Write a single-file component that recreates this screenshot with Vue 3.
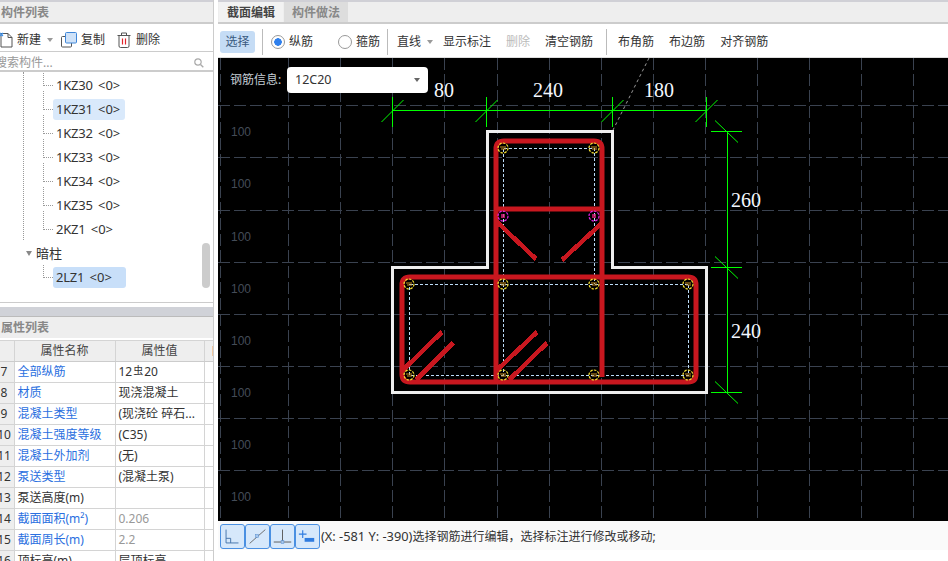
<script setup>
const treeRows = [
  { name: '1KZ30', kind: 'leaf' },
  { name: '1KZ31', kind: 'leaf', sel: 'light' },
  { name: '1KZ32', kind: 'leaf' },
  { name: '1KZ33', kind: 'leaf' },
  { name: '1KZ34', kind: 'leaf' },
  { name: '1KZ35', kind: 'leaf' },
  { name: '2KZ1', kind: 'leaf' },
  { name: '暗柱', kind: 'group' },
  { name: '2LZ1', kind: 'last', sel: 'strong' },
]
const props = [
  { n: 7, name: '全部纵筋', link: true, val: 'rebar' },
  { n: 8, name: '材质', link: true, val: '现浇混凝土' },
  { n: 9, name: '混凝土类型', link: true, val: '(现浇砼 碎石...' },
  { n: 10, name: '混凝土强度等级', link: true, val: '(C35)' },
  { n: 11, name: '混凝土外加剂', link: true, val: '(无)' },
  { n: 12, name: '泵送类型', link: true, val: '(混凝土泵)' },
  { n: 13, name: '泵送高度(m)', val: '' },
  { n: 14, name: '截面面积(m²)', link: true, val: '0.206', muted: true },
  { n: 15, name: '截面周长(m)', link: true, val: '2.2', muted: true },
  { n: 16, name: '顶标高(m)', val: '层顶标高' },
]
const gridX = [288.5, 340.5, 392.5, 444.5, 497.5, 549.5, 601.5, 653.5, 705.5, 757.5, 809.5, 861.5, 913.5]
const gridY = [105.5, 157.5, 210.5, 262.5, 314.5, 366.5, 418.5, 470.5]
const labels = [136, 188, 241, 293, 345, 397, 449, 501]
const yellowBars = [
  [503, 148], [594, 148], [409, 284], [503, 284], [594, 284], [688, 284],
  [409, 375], [503, 375], [594, 375], [688, 375],
]
const pinkBars = [[503, 216], [594, 216]]
const hTicks = [392.5, 486.5, 612.5, 706.5]
const vTicks = [131.5, 267.5, 392.5]
const diagonals = [
  [497, 222, 536, 259], [602, 223, 562, 260],
  [403, 370, 442, 332], [416, 380, 453, 343],
  [497, 370, 537, 332], [509, 380, 547, 343],
]
const dims = [
  { t: '80', x: 434, y: 97 }, { t: '240', x: 533, y: 97 }, { t: '180', x: 644, y: 97 },
  { t: '260', x: 731, y: 207 }, { t: '240', x: 731, y: 338 },
]
</script>

<template>
  <div class="app">
    <aside class="side">
      <div class="panel-head first"><span class="head-title">构件列表</span></div>
      <div class="tools">
        <span class="tool tool-new">
          <svg width="13" height="16" viewBox="0 0 13 16"><path d="M1 1.5H8L12 5.5V15H1Z" fill="#fff" stroke="#555" /><path d="M8 1.5V5.5H12" fill="none" stroke="#555" /><path d="M0 1L3 4M3 1L0 4" stroke="#3b8ee8" stroke-width="1.2" /></svg>
          新建<i class="caret"></i>
        </span>
        <span class="tool tool-copy">
          <svg width="16" height="16" viewBox="0 0 16 16"><rect x="0.5" y="4.5" width="10" height="10.5" rx="1" fill="#fff" stroke="#555" /><rect x="4.5" y="0.5" width="11" height="10.5" rx="1" fill="#cfe2f8" stroke="#3f86d8" /></svg>
          复制
        </span>
        <span class="tool tool-del">
          <svg width="14" height="16" viewBox="0 0 14 16"><path d="M0.5 3.5H13.5M4.5 3V1H9.5V3M2 3.5V14A1.5 1.5 0 0 0 3.5 15.5H10.5A1.5 1.5 0 0 0 12 14V3.5" fill="none" stroke="#555" /><path d="M5.5 6.5V12.5M8.5 6.5V12.5" stroke="#e2252b" stroke-width="1.2" /></svg>
          删除
        </span>
      </div>
      <div class="search">
        <span class="search-text">搜索构件...</span>
        <svg class="search-icon" width="10" height="10" viewBox="0 0 10 10"><circle cx="4" cy="4" r="3.2" fill="none" stroke="#aaa" stroke-width="1.2" /><path d="M6.5 6.5L9.3 9.3" stroke="#aaa" stroke-width="1.4" /></svg>
      </div>
      <div class="tree">
        <div
          v-for="row in treeRows"
          :key="row.name"
          class="tree-row"
          :class="'tree-' + row.kind"
        >
          <template v-if="row.kind === 'group'">
            <i class="tree-caret"></i><span>{{ row.name }}</span>
          </template>
          <span v-else class="tree-item" :class="row.sel">{{ row.name }} <span class="count">&lt;0&gt;</span></span>
        </div>
        <div class="thumb"></div>
      </div>
      <div class="splitter"></div>
      <div class="panel-head second"><span class="head-title">属性列表</span></div>
      <table class="props">
        <colgroup><col class="c-idx" /><col class="c-name" /><col class="c-val" /><col class="c-end" /></colgroup>
        <thead>
          <tr><th></th><th>属性名称</th><th>属性值</th><th><i class="end-mark"></i></th></tr>
        </thead>
        <tbody>
          <tr v-for="p in props" :key="p.n">
            <td class="idx"><div class="idx-num">{{ p.n }}</div></td>
            <td :class="{ link: p.link }">{{ p.name }}</td>
            <td :class="{ muted: p.muted }">
              <template v-if="p.val === 'rebar'">12<span class="rebar">虫</span>20</template>
              <template v-else>{{ p.val }}</template>
            </td>
            <td></td>
          </tr>
        </tbody>
      </table>
    </aside>

    <main class="main">
      <div class="tabs">
        <span class="tab active">截面编辑</span>
        <span class="tab">构件做法</span>
      </div>
      <div class="toolbar">
        <span class="btn-select">选择</span>
        <i class="sep sep-a"></i>
        <span class="radio radio-a"><i class="dot on"></i>纵筋</span>
        <span class="radio radio-b"><i class="dot"></i>箍筋</span>
        <i class="sep sep-b"></i>
        <span class="item item-line">直线<i class="caret"></i></span>
        <span class="item item-show">显示标注</span>
        <span class="item item-del">删除</span>
        <span class="item item-clear">清空钢筋</span>
        <i class="sep sep-c"></i>
        <span class="item item-corner">布角筋</span>
        <span class="item item-edge">布边筋</span>
        <span class="item item-align">对齐钢筋</span>
      </div>
      <div class="canvas">
        <svg class="drawing" width="730" height="463" viewBox="218 58 730 463">
          <g class="grid">
            <line x1="220.5" y1="58" x2="220.5" y2="521" />
            <line v-for="x in gridX" :key="x" :x1="x" y1="58" :x2="x" y2="521" />
            <line v-for="y in gridY" :key="y" x1="218" :y1="y" x2="948" :y2="y" />
          </g>
          <text v-for="y in labels" :key="y" class="grid-label" x="231" :y="y">100</text>
          <line class="leader" x1="649" y1="58" x2="613" y2="130" />
          <path class="outline" d="M487 131.5H612.5V267.5H706V392.5H392.5V267.5H487Z" />
          <path class="stirrup-thin" d="M503.5 148.5H594.5V284M503.5 148.5V375.5M409.5 284H688.5V375.5H409.5Z" />
          <g class="rebars">
            <path d="M410 277H688Q696 277 696 285V374Q696 382 688 382H410Q402 382 402 374V285Q402 277 410 277Z" />
            <path d="M496 382V149Q496 141 504 141H594Q602 141 602 149V377" />
            <path d="M496 209H602" />
            <line v-for="(d, i) in diagonals" :key="i" class="diag" :x1="d[0]" :y1="d[1]" :x2="d[2]" :y2="d[3]" />
          </g>
          <g v-for="(b, i) in yellowBars" :key="'y' + i">
            <circle class="bar bar-y" :cx="b[0]" :cy="b[1]" r="5" />
            <path class="bar-core" :d="`M${b[0] - 3} ${b[1] - 1}h6M${b[0] - 2} ${b[1] + 1}h5`" />
          </g>
          <g v-for="(b, i) in pinkBars" :key="'p' + i">
            <circle class="bar bar-p" :cx="b[0]" :cy="b[1]" r="5" />
            <path class="bar-core-p" :d="`M${b[0] - 2} ${b[1] - 1}h4M${b[0] - 2} ${b[1] + 1}h4`" />
          </g>
          <g class="dim">
            <line x1="392" y1="110.5" x2="707" y2="110.5" />
            <g v-for="x in hTicks" :key="x">
              <line :x1="x" y1="97" :x2="x" y2="127" />
              <line :x1="x - 11" y1="122" :x2="x + 11" y2="100" />
            </g>
            <line x1="727.5" y1="131" x2="727.5" y2="392" />
            <g v-for="y in vTicks" :key="y">
              <line x1="711" :y1="y" x2="742" :y2="y" />
              <line x1="715" :y1="y - 11" x2="738" :y2="y + 11" />
            </g>
          </g>
          <text v-for="d in dims" :key="d.t + d.x" class="dim-text" :x="d.x" :y="d.y">{{ d.t }}</text>
        </svg>
        <div class="rebar-info">
          <span class="info-label">钢筋信息:</span>
          <span class="info-select">12C20<i class="caret dark"></i></span>
        </div>
      </div>
      <div class="status">
        <span class="mode">
          <svg width="25" height="25" viewBox="0 0 25 25"><path d="M5.5 5V19.5H19M5.5 14.5H10.5V19.5" fill="none" stroke="#3f6fa8" /></svg>
        </span>
        <span class="mode">
          <svg width="25" height="25" viewBox="0 0 25 25"><path d="M4 20L21 5" stroke="#666" /><rect x="10.5" y="10.5" width="3" height="3" fill="#a8c8ee" stroke="#5a90d0" stroke-width="0.6" /></svg>
        </span>
        <span class="mode">
          <svg width="25" height="25" viewBox="0 0 25 25"><path d="M12.5 5V18M3 18.5H22" stroke="#555" fill="none" /><rect x="11" y="17" width="3" height="3" fill="#a8c8ee" stroke="#5a90d0" stroke-width="0.6" /></svg>
        </span>
        <span class="mode">
          <svg width="24" height="25" viewBox="0 0 24 25"><path d="M7 6V14M3 10H11" stroke="#2f7ce0" stroke-width="1.2" fill="none" /><rect x="9" y="14" width="10" height="4" fill="#2f7ce0" /></svg>
        </span>
        <span class="status-text"><span class="coords">(X: -581 Y: -390)</span>选择钢筋进行编辑，选择标注进行修改或移动;</span>
      </div>
    </main>
  </div>
</template>

<style>
html, body { margin: 0; background: #fff; overflow: hidden; }
</style>

<style scoped>
.app {
  display: flex;
  width: 948px;
  height: 561px;
  overflow: hidden;
  background: #fff;
  font: 12px/1 "Noto Sans", "Noto Sans CJK SC", sans-serif;
  color: #333;
}
.side {
  flex: 0 0 214px;
  display: flex;
  flex-direction: column;
  height: 561px;
  overflow: hidden;
  box-sizing: border-box;
  border-right: 1px solid #ccc;
}
.panel-head {
  flex: none;
  height: 22px;
  box-sizing: border-box;
  border-top: 2px solid #d0d0d6;
  background: #eee;
  display: flex;
  align-items: center;
  padding-left: 1px;
}
.panel-head.first { padding-top: 2px; }
.panel-head.second { border-top: 0; height: 21px; }
.head-title { font-weight: 700; color: #888; }
.tools {
  flex: none;
  height: 30px;
  box-sizing: border-box;
  padding-top: 4px;
  border-top: 2px solid #ccc;
  border-bottom: 1px solid #ccc;
  display: flex;
  align-items: center;
}
.tool { display: flex; align-items: center; gap: 4px; }
.tool-new { width: 61px; }
.tool-copy { width: 56px; }
.tool-del { gap: 5px; }
.caret {
  width: 0; height: 0;
  margin-left: 6px;
  border: 3px solid transparent;
  border-top: 4px solid #999;
  border-bottom: 0;
}
.tool-new .caret { margin-left: 2px; }
.search {
  flex: none;
  height: 20px;
  box-sizing: border-box;
  padding: 3px 9px 0 0;
  border-bottom: 2px solid #ccc;
  display: flex;
  align-items: center;
  justify-content: space-between;
}
.search-text { margin-left: -5px; color: #999; }
.tree {
  position: relative;
  flex: none;
  height: 231px;
  box-sizing: border-box;
  padding-top: 1px;
  border-bottom: 1px solid #ccc;
  overflow: hidden;
}
.tree::before {
  content: "";
  position: absolute;
  left: 23px; top: 0;
  height: 168px;
  border-left: 1px dotted #999;
}
.tree-row {
  position: relative;
  height: 24px;
  display: flex;
  align-items: center;
  padding-left: 53px;
  font-size: 13px;
}
.tree-leaf::before, .tree-last::before {
  content: "";
  position: absolute;
  left: 43px; top: -6px;
  height: 18px;
  width: 9px;
  border-left: 1px dotted #999;
  border-bottom: 1px dotted #999;
}
.tree-leaf:nth-child(1)::before { top: -14px; height: 26px; }
.tree-last::before { top: 0; height: 12px; }
.tree-group { padding-left: 26px; }
.tree-caret {
  width: 0; height: 0;
  margin-right: 4px;
  border: 3px solid transparent;
  border-top: 5px solid #888;
  border-bottom: 0;
}
.tree-item {
  height: 21px;
  line-height: 21px;
  padding: 0 5px 0 3px;
  border-radius: 3px;
  letter-spacing: -0.2px;
}
.count { margin-left: 2px; letter-spacing: 0; }
.tree-item.light { background: #d9e9fb; }
.tree-item.strong { background: #c8dff9; padding-right: 14px; }
.thumb {
  position: absolute;
  left: 202px; top: 171px;
  width: 8px; height: 45px;
  border-radius: 4px;
  background: #ccc;
}
.splitter {
  flex: none;
  height: 9px;
  margin-top: 4px;
  background: #d0d2d8;
  border-bottom: 1px solid #bbb;
}
.props {
  flex: none;
  table-layout: fixed;
  border-collapse: collapse;
  width: 213px;
  margin-top: 2px;
  border-top: 1px solid #ccc;
}
.c-idx { width: 14px; }
.c-name { width: 101px; }
.c-val { width: 89px; }
.c-end { width: 9px; }
.props th, .props td {
  height: 20px;
  padding: 0 0 0 3px;
  border: 1px solid #d4d4d4;
  border-left: 0;
  white-space: nowrap;
  overflow: hidden;
  box-sizing: content-box;
}
.props th {
  background: #eee;
  font-weight: 400;
  text-align: center;
  padding: 0;
  color: #444;
  border-bottom-color: #ccc;
}
.props td:last-child, .props th:last-child { border-right: 0; }
.props td.idx {
  background: #eee;
  padding: 0;
  overflow: visible;
}
.idx-num { width: 8px; display: flex; justify-content: center; }
.link { color: #2a6fe0; }
.muted { color: #999; }
.rebar { font-size: 10px; position: relative; top: -2px; margin: 0 1px; }
.end-mark {
  display: block;
  width: 1px; height: 10px;
  margin-left: 7px;
  background: #f0c8a0;
}
.main {
  flex: 1;
  margin-left: 4px;
  min-width: 0;
  display: flex;
  flex-direction: column;
  height: 561px;
}
.tabs {
  flex: none;
  height: 22px;
  box-sizing: border-box;
  border-top: 2px solid #d0d0d6;
  background: #eee;
  display: flex;
  gap: 1px;
  padding-left: 1px;
}
.tab {
  width: 64px;
  box-sizing: border-box;
  padding-top: 1px;
  display: flex;
  align-items: center;
  justify-content: center;
  font-weight: 700;
  color: #888;
  background: #ddd;
}
.tab.active { background: #f2f2f2; color: #444; }
.toolbar {
  flex: none;
  height: 36px;
  box-sizing: border-box;
  padding: 2px 0 0 2px;
  border-top: 2px solid #ccc;
  border-bottom: 1px solid #ddd;
  display: flex;
  align-items: center;
}
.btn-select {
  width: 35px; height: 22px;
  display: flex;
  align-items: center;
  justify-content: center;
  border-radius: 3px;
  background: #c5dcf5;
  color: #3a5a80;
}
.sep { width: 1px; height: 26px; background: #bbb; }
.sep-a { margin-left: 7px; }
.radio { display: flex; align-items: center; gap: 4px; }
.radio-a { margin-left: 8px; }
.radio-b { margin-left: 25px; }
.dot {
  width: 14px; height: 14px;
  box-sizing: border-box;
  border: 1px solid #999;
  border-radius: 50%;
  background: #fff;
  display: block;
}
.dot.on { background: radial-gradient(circle, #2f80ed 0 3.5px, #fff 4px); }
.sep-b { margin-left: 7px; }
.item { display: flex; align-items: center; }
.item-line { margin-left: 9px; }
.item-show { margin-left: 10px; }
.item-del { margin-left: 15px; color: #bbb; }
.item-clear { margin-left: 15px; }
.sep-c { margin-left: 13px; }
.item-corner { margin-left: 11px; }
.item-edge, .item-align { margin-left: 15px; }
.canvas {
  position: relative;
  flex: none;
  height: 463px;
  background: #000;
  overflow: hidden;
}
.drawing { display: block; }
.grid line {
  stroke: #3a4250;
  stroke-width: 1;
  stroke-dasharray: 12 4;
  shape-rendering: crispEdges;
}
.grid-label {
  font: 12px "Liberation Sans", sans-serif;
  fill: #444c58;
}
.leader { stroke: #999; stroke-width: 1; stroke-dasharray: 3 3; }
.outline { fill: none; stroke: #eeeeee; stroke-width: 3; shape-rendering: crispEdges; }
.stirrup-thin {
  fill: none;
  stroke: #bcdcf8;
  stroke-width: 1;
  stroke-dasharray: 3 2;
  shape-rendering: crispEdges;
}
.rebars path { fill: none; stroke: #c8171f; stroke-width: 5; }
.rebars .diag { stroke: #c8171f; stroke-width: 4.5; shape-rendering: crispEdges; }
.bar { fill: none; stroke-width: 1.2; stroke-dasharray: 2.6 1.2; }
.bar-y { stroke: #f0dc30; }
.bar-p { stroke: #e020e0; }
.bar-core { fill: none; stroke: #c89020; stroke-width: 1; }
.bar-core-p { fill: none; stroke: #e02080; stroke-width: 1.4; }
.dim line { stroke: #00ff00; stroke-width: 1; }
.dim-text { font: 20px "Liberation Serif", serif; fill: #f4f8ff; }
.rebar-info {
  position: absolute;
  left: 12px; top: 9px;
  display: flex;
  align-items: center;
}
.info-label { width: 57px; color: #c4ccd4; }
.info-select {
  position: relative;
  width: 141px; height: 26px;
  box-sizing: border-box;
  padding-left: 8px;
  display: flex;
  align-items: center;
  border-radius: 4px;
  background: #fff;
  font-size: 12.5px;
}
.caret.dark {
  position: absolute;
  right: 8px; top: 11px;
  border-top-color: #666;
}
.status {
  flex: none;
  height: 40px;
  box-sizing: border-box;
  padding: 3px 0 0 2px;
  display: flex;
  align-items: flex-start;
  background: linear-gradient(#fafafa 0 29px, #fff 29px);
}
.mode {
  width: 25px; height: 25px;
  box-sizing: border-box;
  border: 1px solid #4a90e2;
  border-radius: 3px;
  background: #d6e8fb;
  display: flex;
  align-items: center;
  justify-content: center;
  overflow: hidden;
}
.status-text { margin-left: 1px; line-height: 25px; }
.coords { font-size: 12.8px; }
</style>
